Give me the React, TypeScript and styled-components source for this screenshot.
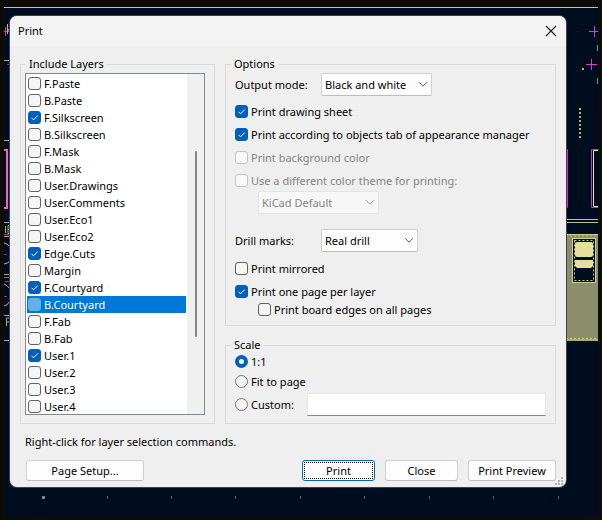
import React, { useState } from "react";
import styled, { createGlobalStyle, css } from "styled-components";

const GlobalStyle = createGlobalStyle`
  *, *::before, *::after { box-sizing: border-box; }
  body {
    margin: 0;
    background: #0d0c09;
    color: #000;
    font: 11px/16px "Noto Sans", "Open Sans", sans-serif;
  }
  button, input, select { font: inherit; color: inherit; }
`;

const Desktop = styled.main`
  position: relative;
  min-height: 100vh;
  padding: 16px 36px 32px 10px;
`;

const Board = styled.div`
  position: absolute;
  inset: 7px 4px 3px 4px;
  overflow: hidden;
  background: #000d1f;
  border-top: 1px solid #b4c2d0;
`;

const BoardEdge = styled.svg<{ $side: "left" | "right" }>`
  position: absolute;
  top: -8px;
  ${(p) => p.$side}: -4px;
`;

const Window = styled.section`
  position: relative;
  display: flex;
  flex-direction: column;
  overflow: hidden;
  background: #efefef;
  border-radius: 7px;
  box-shadow: 0 0 0 1px #3a414a;
`;

const TitleBar = styled.header`
  display: flex;
  align-items: center;
  justify-content: space-between;
  height: 30px;
  padding: 0 8px;
  background: #f3f3f3;
`;

const Title = styled.h1`
  margin: 0;
  font-size: 11px;
  font-weight: 400;
`;

const CloseIconButton = styled.button`
  display: grid;
  place-items: center;
  width: 14px;
  height: 20px;
  padding: 0;
  border: 0;
  background: none;
`;

const Content = styled.form`
  display: flex;
  flex-direction: column;
  padding: 10px 10px 6px;
`;

const Columns = styled.div`
  display: grid;
  grid-template-columns: 195px minmax(0, 1fr);
  gap: 10px;
`;

const Stack = styled.div`
  display: flex;
  flex-direction: column;
  gap: 11px;
`;

const Group = styled.fieldset`
  min-width: 0;
  margin: 0;
  padding: 0 8px 7px;
  border: 1px solid #d9d9d9;
`;

const LayersGroup = styled(Group)`
  padding: 0 9px 8px 4px;
`;

const Legend = styled.legend<{ $shift?: boolean }>`
  margin-left: ${(p) => (p.$shift ? "1px" : "-3px")};
  padding: 0 3px;
`;

const LayerBox = styled.div`
  display: flex;
  height: 342px;
  margin-top: 1px;
  overflow: hidden;
  background: #fff;
  border: 1px solid #828790;
`;

const LayerList = styled.ul`
  flex: 1;
  margin: 0;
  padding: 1px;
  list-style: none;
`;

const LayerItem = styled.li<{ $selected: boolean }>`
  height: 17px;
  padding-left: 1px;
  ${(p) => p.$selected && css`background: #0078d7; color: #fff;`}
`;

const ScrollTrack = styled.div`
  display: flex;
  justify-content: center;
  width: 17px;
  padding-top: 77px;
  background: #f0f0f0;
`;

const ScrollThumb = styled.div`
  width: 2px;
  height: 186px;
  border-radius: 1px;
  background: #858585;
`;

const Choice = styled.label<{ $muted?: boolean }>`
  display: flex;
  align-items: center;
  gap: 3px;
  height: 17px;
  white-space: nowrap;
  ${(p) => p.$muted && css`color: #838383;`}
`;

const Mark = styled.span`
  display: grid;
  flex: none;
  width: 13px;
  height: 13px;
  > * { grid-area: 1 / 1; }
  > svg { pointer-events: none; }
`;

const CheckInput = styled.input<{ $highlight?: boolean }>`
  appearance: none;
  width: 13px;
  height: 13px;
  margin: 0;
  border: 1px solid #626262;
  border-radius: 3px;
  background: #f5f5f5;
  &:checked { background: #005fb8; border-color: #005fb8; }
  &:disabled { background: #f9f9f9; border-color: #c3c3c3; }
  ${(p) => p.$highlight && css`background: #66aee7; border-color: #66aee7;`}
`;

const RadioInput = styled.input`
  appearance: none;
  width: 13px;
  height: 13px;
  margin: 0;
  border: 1px solid #757575;
  border-radius: 50%;
  background: #f5f5f5;
  &:checked { background: #fff; border: 4px solid #005fb8; }
`;

const OptionRows = styled.div`
  display: grid;
  gap: 6px;
  padding-left: 1px;
`;

const FieldRow = styled.div`
  display: grid;
  grid-template-columns: 86px auto;
  justify-content: start;
  align-items: center;
  padding-left: 1px;
`;

const OutputRow = styled(FieldRow)`
  margin: 1px 0 7px;
`;

const ThemeRow = styled.div`
  margin: 2px 0 15px 24px;
`;

const DrillRow = styled(FieldRow)`
  margin-bottom: 8px;
`;

const Indented = styled.div`
  margin: 1px 0 0 24px;
`;

const SelectWrap = styled.span<{ $width: number }>`
  position: relative;
  display: block;
  width: ${(p) => p.$width}px;
  > svg { position: absolute; top: 8px; right: 4px; pointer-events: none; }
`;

const SelectBox = styled.select`
  appearance: none;
  display: block;
  width: 100%;
  height: 23px;
  padding: 0 16px 0 3px;
  border: 1px solid #d0d0d0;
  border-bottom-color: #bdbdbd;
  border-radius: 2px;
  background: #fdfdfd;
  &:disabled { color: #838383; opacity: 1; border-color: #e4e4e4; background: #f7f7f7; }
`;

const ScaleRows = styled.div`
  display: grid;
  gap: 3px;
  padding: 0 1px;
`;

const CustomRow = styled.div`
  display: grid;
  grid-template-columns: 72px minmax(0, 1fr);
  align-items: center;
`;

const ScaleInput = styled.input`
  width: 100%;
  height: 23px;
  padding: 0 4px;
  border: 1px solid #e6e6e6;
  border-bottom-color: #868686;
  border-radius: 1px;
  background: #fff;
`;

const Hint = styled.p`
  margin: 10px 5px 10px;
`;

const Actions = styled.footer`
  display: flex;
  gap: 10px;
  padding-left: 6px;
`;

const ActionButton = styled.button<{ $width: number; $primary?: boolean }>`
  width: ${(p) => p.$width}px;
  height: 21px;
  padding: 0;
  border: 1px solid #d0d0d0;
  border-bottom-color: #bdbdbd;
  border-radius: 3px;
  background: #fdfdfd;
  line-height: 16px;
  white-space: nowrap;
  ${(p) => p.$primary && css`
    border-color: #0067c0;
    outline: 1px dotted #000;
    outline-offset: -3px;
  `}
`;

const Spacer = styled.span`
  flex: 1;
`;

const Grip = styled.svg`
  position: absolute;
  right: 3px;
  bottom: 2px;
`;

const Tick = () => (
  <svg width="13" height="13" viewBox="0 0 13 13" fill="none" stroke="#fff" strokeWidth="1">
    <path d="M3.5 6.8 5.5 8.8 9.8 4.5" />
  </svg>
);

const Chevron = ({ color = "#555" }: { color?: string }) => (
  <svg width="10" height="7" viewBox="0 0 10 7" fill="none" stroke={color}>
    <path d="M1 1.2 5 5.2 9 1.2" />
  </svg>
);

type CheckProps = {
  label: string;
  initial?: boolean;
  disabled?: boolean;
  highlight?: boolean;
};

const Check = ({ label, initial = false, disabled, highlight }: CheckProps) => {
  const [on, setOn] = useState(initial);
  return (
    <Choice $muted={disabled}>
      <Mark>
        <CheckInput
          type="checkbox"
          checked={on}
          disabled={disabled}
          $highlight={highlight}
          onChange={(e) => setOn(e.target.checked)}
        />
        {on && <Tick />}
      </Mark>
      {label}
    </Choice>
  );
};

const Radio = ({ label, initial = false }: { label: string; initial?: boolean }) => (
  <Choice>
    <Mark>
      <RadioInput type="radio" name="scale" defaultChecked={initial} />
    </Mark>
    {label}
  </Choice>
);

const layers = [
  "F.Paste", "B.Paste", "F.Silkscreen", "B.Silkscreen", "F.Mask", "B.Mask",
  "User.Drawings", "User.Comments", "User.Eco1", "User.Eco2", "Edge.Cuts",
  "Margin", "F.Courtyard", "B.Courtyard", "F.Fab", "B.Fab",
  "User.1", "User.2", "User.3", "User.4",
];
const printed = new Set(["F.Silkscreen", "Edge.Cuts", "F.Courtyard", "User.1"]);
const current = "B.Courtyard";

const gridMarks = [107, 171, 235, 300, 364, 429, 493, 558];

const BoardArt = () => (
  <Board aria-hidden="true">
    <BoardEdge $side="left" width="602" height="520" viewBox="0 0 602 520" fill="none">
      <path d="M4 31.5h6M5.5 27v9" stroke="#c93bb6" />
      <path d="M7.5 24v10M8 29l2 3" stroke="#b9bd8b" />
      <path d="M4 60.5h6M4 140.5h6M4 340.5h6" stroke="#9db29a" />
      <path d="M7 64.5h3M4 254.5h3M4 296.5h3" stroke="#87308c" />
      <path d="M4 150h3v58h-3" stroke="#ee62c4" strokeWidth="2" />
      <path d="M4 222.5h6M5.5 226v7M10 225.5h-2v8h2M8 229.5h2M4 236.5h6" stroke="#a9ad87" />
      <path d="M4 234.5h6M5 281.5h5" stroke="#b02d9b" />
      <path d="M4 243q3 0 6 4M4 264q3 0 6-3M4 284q3 1 6 5M4 306q3 0 6-5" stroke="#a6b29d" />
      <path d="M4 274.5h6M4 315.5h6" stroke="#bba75e" />
      <path d="M4 277.5h6" stroke="#a66a60" />
      <path d="M6.5 326v-8h3M6.5 322h3l1 4" stroke="#9fa485" />
      <rect x="42" y="496" width="3" height="3" fill="#7b838c" />
      {gridMarks.map((x) => (
        <rect key={x} x={x} y="496" width="1" height="3" fill="#59636f" />
      ))}
    </BoardEdge>
    <BoardEdge $side="right" width="42" height="520" viewBox="560 0 42 520" fill="none">
      <path d="M589 31.5h10M594.5 26v11M586 64.5h11M591.5 59v11" stroke="#d63fd2" />
      <path d="M597.5 45v6M597.5 78v6" stroke="#49a29b" />
      <rect x="582" y="68" width="2" height="2" fill="#dba746" />
      <path d="M580 108v32" stroke="#b4b469" strokeWidth="2" strokeDasharray="2 2" />
      <path d="M566 149.5h1.5v58H566M599 149.5h-7.5v58h7.500" stroke="#cc33c4" />
      <path d="M599 150.5h-5.5v56h5.500" stroke="#e6e3ca" />
      <path d="M566 219.5h32M566 222.5h32" stroke="#bdc596" />
      <rect x="566" y="234" width="32" height="107" fill="#8b8e6a" />
      <path d="M566 234.5h32M566 340h32" stroke="#c7cb91" />
      <path d="M566 236h32M566 338.5h32" stroke="#c9c86b" strokeDasharray="2 2" />
      <rect x="572.5" y="238.5" width="23" height="44" fill="#000d1f" stroke="#d1cf90" />
      <rect x="574.5" y="240.5" width="19" height="40" stroke="#c5c38a" strokeDasharray="2 2" />
      <rect x="575" y="242" width="18" height="15" rx="2" fill="#e4df9c" />
      <path d="M575 260h18v6l-2 2h-14l-2-2z" fill="#e4df9c" />
    </BoardEdge>
  </Board>
);

export default function App() {
  return (
    <>
      <GlobalStyle />
      <Desktop>
        <BoardArt />
        <Window role="dialog" aria-labelledby="print-title">
          <TitleBar>
            <Title id="print-title">Print</Title>
            <CloseIconButton type="button" aria-label="Close window">
              <svg width="12" height="12" viewBox="0 0 12 12" stroke="#222" strokeWidth="1.2">
                <path d="M1 1 11 11M11 1 1 11" />
              </svg>
            </CloseIconButton>
          </TitleBar>
          <Content onSubmit={(e) => e.preventDefault()}>
            <Columns>
              <LayersGroup>
                <Legend $shift>Include Layers</Legend>
                <LayerBox>
                  <LayerList>
                    {layers.map((name) => (
                      <LayerItem key={name} $selected={name === current}>
                        <Check label={name} initial={printed.has(name)} highlight={name === current} />
                      </LayerItem>
                    ))}
                  </LayerList>
                  <ScrollTrack>
                    <ScrollThumb />
                  </ScrollTrack>
                </LayerBox>
              </LayersGroup>
              <Stack>
                <Group>
                  <Legend>Options</Legend>
                  <OutputRow>
                    <label htmlFor="output-mode">Output mode:</label>
                    <SelectWrap $width={111}>
                      <SelectBox id="output-mode">
                        <option>Black and white</option>
                        <option>Color</option>
                      </SelectBox>
                      <Chevron />
                    </SelectWrap>
                  </OutputRow>
                  <OptionRows>
                    <Check label="Print drawing sheet" initial />
                    <Check label="Print according to objects tab of appearance manager" initial />
                    <Check label="Print background color" disabled />
                    <Check label="Use a different color theme for printing:" disabled />
                  </OptionRows>
                  <ThemeRow>
                    <SelectWrap $width={121}>
                      <SelectBox disabled aria-label="Color theme">
                        <option>KiCad Default</option>
                      </SelectBox>
                      <Chevron color="#999" />
                    </SelectWrap>
                  </ThemeRow>
                  <DrillRow>
                    <label htmlFor="drill-marks">Drill marks:</label>
                    <SelectWrap $width={97}>
                      <SelectBox id="drill-marks">
                        <option>Real drill</option>
                        <option>No drill</option>
                      </SelectBox>
                      <Chevron />
                    </SelectWrap>
                  </DrillRow>
                  <OptionRows>
                    <Check label="Print mirrored" />
                    <Check label="Print one page per layer" initial />
                  </OptionRows>
                  <Indented>
                    <Check label="Print board edges on all pages" />
                  </Indented>
                </Group>
                <Group>
                  <Legend>Scale</Legend>
                  <ScaleRows>
                    <Radio label="1:1" initial />
                    <Radio label="Fit to page" />
                    <CustomRow>
                      <Radio label="Custom:" />
                      <ScaleInput type="text" aria-label="Custom scale" />
                    </CustomRow>
                  </ScaleRows>
                </Group>
              </Stack>
            </Columns>
            <Hint>Right-click for layer selection commands.</Hint>
            <Actions>
              <ActionButton type="button" $width={118}>Page Setup...</ActionButton>
              <Spacer />
              <ActionButton type="submit" $width={73} $primary>Print</ActionButton>
              <ActionButton type="button" $width={73}>Close</ActionButton>
              <ActionButton type="button" $width={88}>Print Preview</ActionButton>
            </Actions>
          </Content>
          <Grip width="8" height="8" viewBox="0 0 8 8" fill="#b5b5b5" aria-hidden="true">
            <path d="M6 0h2v2H6zM3 3h2v2H3zM6 3h2v2H6zM0 6h2v2H0zM3 6h2v2H3zM6 6h2v2H6z" />
          </Grip>
        </Window>
      </Desktop>
    </>
  );
}
